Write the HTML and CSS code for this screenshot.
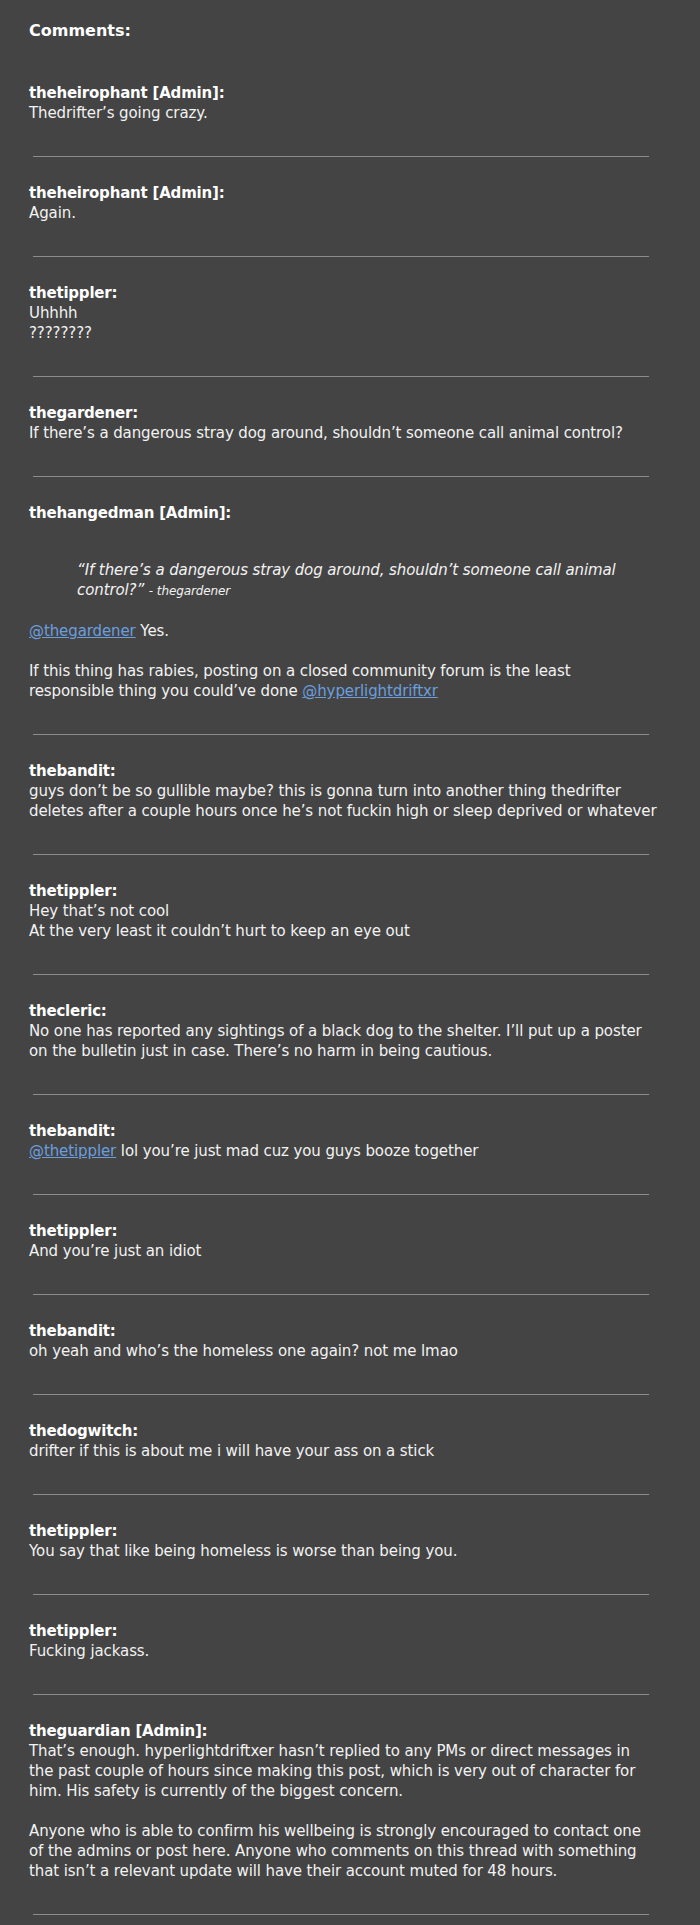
FILE: index.html
```html
<!DOCTYPE html>
<html lang="en">
<head>
<meta charset="utf-8">
<title>Comments</title>
<link rel="stylesheet" href="styles.css">
</head>
<body>
<main class="thread">
  <h2 class="thread-title">Comments:</h2>

  <article class="comment">
    <div class="author">theheirophant [Admin]:</div>
    <p class="body">Thedrifter’s going crazy.</p>
  </article>
  <hr class="divider">

  <article class="comment">
    <div class="author">theheirophant [Admin]:</div>
    <p class="body">Again.</p>
  </article>
  <hr class="divider">

  <article class="comment">
    <div class="author">thetippler:</div>
    <p class="body">Uhhhh<br>????????</p>
  </article>
  <hr class="divider">

  <article class="comment">
    <div class="author">thegardener:</div>
    <p class="body">If there’s a dangerous stray dog around, shouldn’t someone call animal control?</p>
  </article>
  <hr class="divider">

  <article class="comment">
    <div class="author">thehangedman [Admin]:</div>
    <blockquote class="quote">“If there’s a dangerous stray dog around, shouldn’t someone call animal<br>control?” <span class="quote-src">- thegardener</span></blockquote>
    <p class="body"><a class="mention" href="#">@thegardener</a> Yes.</p>
    <p class="body gap">If this thing has rabies, posting on a closed community forum is the least<br>responsible thing you could’ve done <a class="mention" href="#">@hyperlightdriftxr</a></p>
  </article>
  <hr class="divider">

  <article class="comment">
    <div class="author">thebandit:</div>
    <p class="body">guys don’t be so gullible maybe? this is gonna turn into another thing thedrifter<br>deletes after a couple hours once he’s not fuckin high or sleep deprived or whatever</p>
  </article>
  <hr class="divider">

  <article class="comment">
    <div class="author">thetippler:</div>
    <p class="body">Hey that’s not cool<br>At the very least it couldn’t hurt to keep an eye out</p>
  </article>
  <hr class="divider">

  <article class="comment">
    <div class="author">thecleric:</div>
    <p class="body">No one has reported any sightings of a black dog to the shelter. I’ll put up a poster<br>on the bulletin just in case. There’s no harm in being cautious.</p>
  </article>
  <hr class="divider">

  <article class="comment">
    <div class="author">thebandit:</div>
    <p class="body"><a class="mention" href="#">@thetippler</a> lol you’re just mad cuz you guys booze together</p>
  </article>
  <hr class="divider">

  <article class="comment">
    <div class="author">thetippler:</div>
    <p class="body">And you’re just an idiot</p>
  </article>
  <hr class="divider">

  <article class="comment">
    <div class="author">thebandit:</div>
    <p class="body">oh yeah and who’s the homeless one again? not me lmao</p>
  </article>
  <hr class="divider">

  <article class="comment">
    <div class="author">thedogwitch:</div>
    <p class="body">drifter if this is about me i will have your ass on a stick</p>
  </article>
  <hr class="divider">

  <article class="comment">
    <div class="author">thetippler:</div>
    <p class="body">You say that like being homeless is worse than being you.</p>
  </article>
  <hr class="divider">

  <article class="comment">
    <div class="author">thetippler:</div>
    <p class="body">Fucking jackass.</p>
  </article>
  <hr class="divider">

  <article class="comment">
    <div class="author">theguardian [Admin]:</div>
    <p class="body">That’s enough. hyperlightdriftxer hasn’t replied to any PMs or direct messages in<br>the past couple of hours since making this post, which is very out of character for<br>him. His safety is currently of the biggest concern.</p>
    <p class="body gap">Anyone who is able to confirm his wellbeing is strongly encouraged to contact one<br>of the admins or post here. Anyone who comments on this thread with something<br>that isn’t a relevant update will have their account muted for 48 hours.</p>
  </article>
  <hr class="divider">
</main>
</body>
</html>
```

FILE: styles.css
```css
html, body {
  margin: 0;
  padding: 0;
  background: #444444;
}

body {
  color: #f2f2f2;
  font-family: "DejaVu Sans", "Liberation Sans", sans-serif;
  font-size: 15px;
  line-height: 20px;
  letter-spacing: -0.1px;
}

.thread {
  width: 645px;
  padding: 21px 0 9px 29px;
}

.thread-title {
  margin: 0 0 16px;
  font-size: 16px;
  line-height: 20px;
  font-weight: bold;
  letter-spacing: 0;
  color: #ffffff;
}

.comment {
  padding: 26px 0 33px;
}

.author {
  font-weight: bold;
  letter-spacing: -0.2px;
  color: #ffffff;
}

.body {
  margin: 0;
}

.body.gap {
  margin-top: 20px;
}

.quote {
  margin: 37px 0 20px 48px;
  font-style: italic;
}

.quote-src {
  font-size: 12px;
}

.mention {
  color: #6b9ede;
  text-decoration: underline;
}

.divider {
  width: 616px;
  margin: 0 0 0 4px;
  height: 0;
  border: 0;
  border-top: 1px solid #8c8c8c;
}
```
